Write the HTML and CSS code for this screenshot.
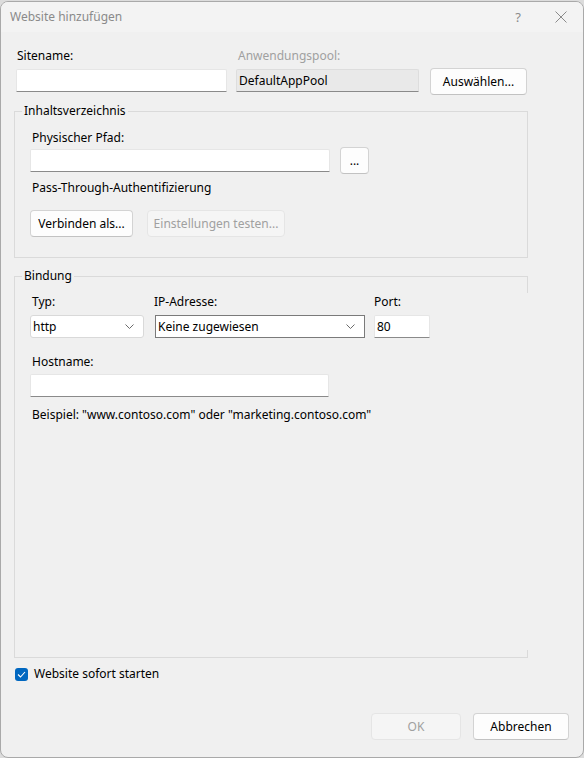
FILE: index.html
```html
<!DOCTYPE html>
<html lang="de">
<head>
  <meta charset="UTF-8" />
  <title>Website hinzufügen</title>
  <meta name="viewport" content="width=device-width, initial-scale=1" />
  <link rel="stylesheet" href="styles.css">
</head>
<body>
  <div class="window">
    <div class="titlebar">
      <span class="title">Website hinzufügen</span>
      <span class="tb-help">?</span>
      <span class="tb-close">
        <svg width="12" height="12" viewBox="0 0 12 12"><path d="M0.5 0.5 L11.5 11.5 M11.5 0.5 L0.5 11.5" stroke="#8a8a8a" stroke-width="1" fill="none"/></svg>
      </span>
    </div>

    <div class="content">
      <div class="site-row">
        <div class="field">
          <label>Sitename:</label>
          <div class="textbox site-name"></div>
        </div>
        <div class="field">
          <label class="disabled">Anwendungspool:</label>
          <div class="textbox readonly pool-name">DefaultAppPool</div>
        </div>
        <button class="btn select-btn">Auswählen...</button>
      </div>

      <fieldset class="group group-dir">
        <legend>Inhaltsverzeichnis</legend>
        <label class="path-label">Physischer Pfad:</label>
        <div class="path-row">
          <div class="textbox path-box"></div>
          <button class="btn browse-btn">...</button>
        </div>
        <div class="pass-label">Pass-Through-Authentifizierung</div>
        <div class="auth-row">
          <button class="btn connect-btn">Verbinden als...</button>
          <button class="btn disabled test-btn">Einstellungen testen...</button>
        </div>
      </fieldset>

      <fieldset class="group group-bind">
        <legend>Bindung</legend>
        <div class="bind-row">
          <div class="field">
            <label>Typ:</label>
            <div class="combo type-combo">
              <span>http</span>
              <svg width="9" height="5" viewBox="0 0 9 5"><path d="M0.5 0.5 L4.5 4.5 L8.5 0.5" stroke="#6b6b6b" fill="none"/></svg>
            </div>
          </div>
          <div class="field">
            <label class="ip-label">IP-Adresse:</label>
            <div class="combo ip-combo">
              <span>Keine zugewiesen</span>
              <svg width="9" height="5" viewBox="0 0 9 5"><path d="M0.5 0.5 L4.5 4.5 L8.5 0.5" stroke="#6b6b6b" fill="none"/></svg>
            </div>
          </div>
          <div class="field">
            <label>Port:</label>
            <div class="textbox port-box">80</div>
          </div>
        </div>
        <label class="host-label">Hostname:</label>
        <div class="textbox host-box"></div>
        <div class="example">Beispiel: "www.contoso.com" oder "marketing.contoso.com"</div>
      </fieldset>

      <div class="start-row">
        <span class="checkbox">
          <svg width="9" height="7" viewBox="0 0 9 7"><path d="M1 3.5 L3.5 6 L8 1" stroke="#fff" stroke-width="1.1" fill="none"/></svg>
        </span>
        <span>Website sofort starten</span>
      </div>

      <div class="footer">
        <button class="btn disabled ok-btn">OK</button>
        <button class="btn cancel-btn">Abbrechen</button>
      </div>
    </div>
  </div>
</body>
</html>
```

FILE: styles.css
```css
body {
  margin: 0;
  background: #dcdcdc;
  font-family: 'Noto Sans', 'Open Sans', sans-serif;
  font-size: 12px;
  color: #000;
}
.window {
  box-sizing: border-box;
  width: 584px;
  height: 757px;
  margin-top: 1px;
  background: #f0f0f0;
  border: 1px solid #a9a9a9;
  border-radius: 8px;
  overflow: hidden;
}
.titlebar {
  height: 30px;
  background: #f3f3f3;
  display: flex;
  align-items: center;
  padding-left: 9px;
  color: #8a8a8a;
}
.title {
  flex: 1;
  line-height: 16px;
}
.tb-help {
  width: 46px;
  text-align: center;
  font-size: 13px;
}
.tb-close {
  width: 40px;
  display: flex;
  justify-content: center;
  margin-right: 2px;
}
.content {
  padding: 16px 14px 0 13px;
}
label, .pass-label, .example, legend {
  display: block;
  line-height: 16px;
}
.disabled {
  color: #a0a0a0;
}
.field {
  display: flex;
  flex-direction: column;
}
.textbox {
  box-sizing: border-box;
  height: 23px;
  background: #fff;
  border: 1px solid #e6e6e6;
  border-bottom-color: #8a8a8a;
  border-radius: 2px 2px 0 0;
  padding: 0 2px;
  line-height: 21px;
}
.textbox.readonly {
  background: #e9e9e9;
  border-color: #dddddd;
  border-bottom-color: #8a8a8a;
}
.btn {
  box-sizing: border-box;
  height: 27px;
  padding: 0;
  background: #fdfdfd;
  border: 1px solid #d3d3d3;
  border-bottom-color: #c2c2c2;
  border-radius: 4px;
  font-family: inherit;
  font-size: 12px;
  color: #000;
}
.btn.disabled {
  background: #f5f5f5;
  border-color: #e5e5e5;
  color: #a0a0a0;
}

/* first row: site name, app pool */
.site-row {
  display: flex;
  align-items: flex-end;
  margin-left: 2px;
}
.site-row label {
  margin-bottom: 5px;
  margin-left: 1px;
}
.site-name {
  width: 211px;
}
.site-row .field + .field {
  margin-left: 9px;
}
.site-row .field + .field label {
  margin-left: 2px;
}
.pool-name {
  width: 183px;
}
.select-btn {
  width: 97px;
  margin-left: 11px;
  margin-bottom: -3px;
}

/* group boxes */
.group {
  box-sizing: border-box;
  width: 514px;
  margin: 11px 0 0;
  padding: 0 15px;
  border: 1px solid #dadada;
}
legend {
  padding: 0 2px;
  margin-left: -8px;
}
.group-dir {
  height: 155px;
  padding-top: 11px;
}
.group-dir label,
.group-dir .pass-label {
  margin-left: 2px;
}
.path-row {
  display: flex;
  align-items: center;
  gap: 10px;
  margin-top: 1px;
}
.path-box {
  width: 300px;
}
.browse-btn {
  width: 29px;
}
.pass-label {
  margin-top: 6px;
}
.auth-row {
  display: flex;
  gap: 14px;
  margin-top: 14px;
}
.connect-btn {
  width: 103px;
}
.test-btn {
  width: 138px;
}

.group-bind {
  position: relative;
  height: 390px;
  margin-top: 10px;
  padding-top: 10px;
  border-right: none;
}
/* right edge only shows at the corners */
.group-bind::before,
.group-bind::after {
  content: "";
  position: absolute;
  right: 0;
  width: 1px;
  background: #dadada;
}
.group-bind::before {
  top: -8px;
  height: 17px;
}
.group-bind::after {
  bottom: -1px;
  height: 8px;
}
.bind-row {
  display: flex;
}
.bind-row label {
  margin-bottom: 5px;
  margin-left: 2px;
}
.combo {
  box-sizing: border-box;
  height: 23px;
  display: flex;
  align-items: center;
  justify-content: space-between;
  background: #fff;
  padding: 0 9px 0 2px;
}
.type-combo {
  width: 114px;
  border: 1px solid #d9d9d9;
  border-radius: 3px;
}
.ip-combo {
  width: 210px;
  margin-left: 11px;
  border: 1px solid #7a7a7a;
}
.bind-row .ip-label {
  margin-left: 10px;
}
.port-box {
  width: 56px;
  margin-left: 9px;
}
.bind-row .field:last-child label {
  margin-left: 9px;
}
.host-label {
  margin-top: 16px;
  margin-left: 2px;
}
.host-box {
  width: 299px;
  margin-top: 4px;
}
.example {
  margin-top: 10px;
  margin-left: 2px;
}

/* checkbox and buttons */
.start-row {
  display: flex;
  align-items: center;
  gap: 6px;
  margin: 8px 0 0 1px;
  line-height: 16px;
}
.checkbox {
  width: 13px;
  height: 13px;
  border-radius: 3px;
  background: #0067c0;
  display: flex;
  align-items: center;
  justify-content: center;
}
.footer {
  display: flex;
  justify-content: flex-end;
  gap: 12px;
  margin-top: 31px;
}
.ok-btn {
  width: 90px;
}
.cancel-btn {
  width: 96px;
}
```
